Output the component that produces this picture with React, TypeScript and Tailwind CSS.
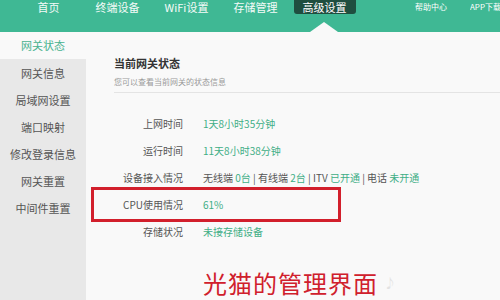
import React from "react";

// 光猫 admin page: green top nav, grey side menu, gateway status table with annotation.

const NAV = ["首页", "终端设备", "WiFi设置", "存储管理"];
const SIDE = ["网关信息", "局域网设置", "端口映射", "修改登录信息", "网关重置", "中间件重置"];

function Row({ label, children }: { label: string; children: React.ReactNode }) {
  return (
    <div className="flex h-[27px] items-center text-[10px]">
      <span className="w-[69px] whitespace-nowrap text-right text-[#555]">{label}</span>
      <span className="ml-[20px] whitespace-nowrap text-[#3fae86]">{children}</span>
    </div>
  );
}

export default function App() {
  return (
    <div
      className="flex h-[300px] w-[500px] flex-col overflow-hidden bg-[#f9f9f9]"
      style={{ fontFamily: '"Noto Sans CJK SC", "Liberation Sans", sans-serif' }}
    >
      {/* top bar */}
      <header className="relative h-[32px] shrink-0 bg-[#3fb894]">
        <nav className="flex h-[14px] items-center pl-[14px] text-[11px] text-[#f4fbf8]">
          {NAV.map((n) => (
            <span key={n} className="flex w-[69px] justify-center">
              {n}
            </span>
          ))}
          <span className="flex w-[69px] justify-center">
            <span className="flex h-[14px] w-[62px] items-center justify-center rounded-b-[3px] bg-[#1f4e3f] text-[11px] text-white">
              高级设置
            </span>
          </span>
          <span className="ml-auto mr-[23px] text-[8px] text-white">帮助中心</span>
          <span className="w-[30px] overflow-hidden whitespace-nowrap text-[8px] text-white">APP下载</span>
        </nav>
        <span className="absolute bottom-0 left-[310px] h-0 w-0 border-x-[14px] border-b-[10px] border-x-transparent border-b-[#f9f9f9]" />
      </header>

      <div className="flex flex-1">
        {/* side menu */}
        <aside className="flex w-[86px] shrink-0 flex-col text-[11px] text-[#555]">
          <div className="flex h-[27px] items-center justify-center bg-[#f9f9f9] text-[#48b28f]">网关状态</div>
          <div className="flex flex-1 flex-col bg-[#e8e8e8] pt-[1px]">
            {SIDE.map((s) => (
              <div key={s} className="flex h-[27px] items-center justify-center whitespace-nowrap">
                {s}
              </div>
            ))}
          </div>
        </aside>

        {/* content */}
        <main className="relative flex-1 pl-[28px] pt-[24px]">
          <h1 className="text-[11px] font-bold leading-[14px] text-[#333]">当前网关状态</h1>
          <p className="mt-[7px] text-[8px] leading-[10px] text-[#999]">您可以查看当前网关的状态信息</p>
          <div className="mt-[5px] border-b border-[#e4e4e4]" />

          <div className="mt-[17px]">
            <Row label="上网时间">1天8小时35分钟</Row>
            <Row label="运行时间">11天8小时38分钟</Row>
            <Row label="设备接入情况">
              <span className="text-[#555]">无线端 </span>0台<span className="text-[#555]"> | 有线端 </span>2台
              <span className="text-[#555]"> | ITV </span>已开通<span className="text-[#555]"> | 电话 </span>未开通
            </Row>
            <Row label="CPU使用情况">61%</Row>
            <Row label="存储状况">未接存储设备</Row>
          </div>

          <div className="mt-[24px] flex items-center pl-[89px]">
            <span className="text-[24px] font-normal leading-[28px] tracking-[1px] text-[#d0202c]">光猫的管理界面</span>
            <span className="ml-[6px] text-[12px] text-[#e2e2e2]">♪</span>
          </div>

          {/* annotation box */}
          <div className="absolute left-[5px] top-[155px] h-[35px] w-[250px] border-[3px] border-[#d21f2c]" />
        </main>
      </div>
    </div>
  );
}
